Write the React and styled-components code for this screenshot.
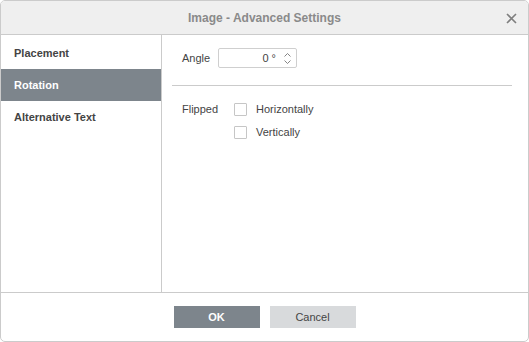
import React, { useState } from "react";
import styled, { createGlobalStyle } from "styled-components";

const GlobalStyle = createGlobalStyle`
  html, body {
    margin: 0;
    padding: 0;
    background: #ffffff;
  }
  body {
    font-family: Arial, "Liberation Sans", Helvetica, sans-serif;
    font-size: 11px;
    color: #444444;
  }
`;

const Dialog = styled.div`
  width: 529px;
  height: 342px;
  box-sizing: border-box;
  border: 1px solid #cbcbcb;
  border-radius: 5px;
  overflow: hidden;
  display: flex;
  flex-direction: column;
  background: #ffffff;
`;

const Header = styled.div`
  height: 33px;
  flex: none;
  background: #efefef;
  border-bottom: 1px solid #cbcbcb;
  position: relative;
  display: flex;
  align-items: center;
  justify-content: center;
`;

const Title = styled.div`
  font-size: 12px;
  font-weight: bold;
  color: #8a8a8a;
`;

const CloseButton = styled.div`
  position: absolute;
  right: 11px;
  top: 11px;
  width: 12px;
  height: 12px;
  display: flex;
  align-items: center;
  justify-content: center;
`;

const Body = styled.div`
  flex: 1;
  display: flex;
  min-height: 0;
`;

const Sidebar = styled.div`
  width: 160px;
  flex: none;
  border-right: 1px solid #cbcbcb;
  padding-top: 2px;
  display: flex;
  flex-direction: column;
`;

const NavItem = styled.div`
  height: 32px;
  display: flex;
  align-items: center;
  padding-left: 13px;
  font-weight: bold;
  font-size: 11px;
  color: ${(p) => (p.$active ? "#ffffff" : "#444444")};
  background: ${(p) => (p.$active ? "#7d858c" : "transparent")};
`;

const Panel = styled.div`
  flex: 1;
  padding: 13px 16px 0 10px;
  display: flex;
  flex-direction: column;
`;

const Row = styled.div`
  display: flex;
  align-items: ${(p) => (p.$top ? "flex-start" : "center")};
  margin-left: 10px;
`;

const Label = styled.div`
  width: ${(p) => p.$width}px;
  flex: none;
  height: 20px;
  line-height: 21px;
  font-size: 11px;
  color: #444444;
`;

const SpinBox = styled.div`
  width: 77px;
  height: 18px;
  border: 1px solid #cfcfcf;
  border-radius: 2px;
  display: flex;
  align-items: center;
  justify-content: flex-end;
  font-size: 11px;
  color: #444444;
`;

const SpinValue = styled.span`
  margin-right: 5px;
`;

const SpinArrows = styled.div`
  width: 13px;
  height: 18px;
  display: flex;
  flex-direction: column;
  align-items: center;
  justify-content: center;
  gap: 3px;
  margin-right: 2px;
`;

const Divider = styled.div`
  height: 1px;
  background: #cbcbcb;
  margin: 17px 0 13px;
`;

const CheckColumn = styled.div`
  display: flex;
  flex-direction: column;
  gap: 3px;
`;

const CheckLine = styled.label`
  display: flex;
  align-items: center;
  height: 20px;
  gap: 9px;
  font-size: 11px;
  color: #444444;
  cursor: pointer;
`;

const CheckBox = styled.span`
  width: 11px;
  height: 11px;
  border: 1px solid #c6c6c6;
  border-radius: 1px;
  background: #ffffff;
  display: inline-block;
`;

const Footer = styled.div`
  height: 48px;
  flex: none;
  border-top: 1px solid #cbcbcb;
  display: flex;
  align-items: center;
  justify-content: center;
  gap: 10px;
`;

const Button = styled.div`
  width: 86px;
  height: 22px;
  display: flex;
  align-items: center;
  justify-content: center;
  font-size: 11px;
  font-weight: ${(p) => (p.$primary ? "bold" : "normal")};
  background: ${(p) => (p.$primary ? "#7d858c" : "#d8dadc")};
  color: ${(p) => (p.$primary ? "#ffffff" : "#444444")};
`;

const Chevron = ({ up }) => (
  <svg width="7" height="4" viewBox="0 0 7 4">
    <path
      d={up ? "M0.5 3.5 L3.5 0.5 L6.5 3.5" : "M0.5 0.5 L3.5 3.5 L6.5 0.5"}
      fill="none"
      stroke="#777"
      strokeWidth="0.9"
    />
  </svg>
);

const App = () => {
  const [active] = useState("Rotation");
  const tabs = ["Placement", "Rotation", "Alternative Text"];

  return (
    <>
      <GlobalStyle />
      <Dialog>
        <Header>
          <Title>Image - Advanced Settings</Title>
          <CloseButton>
            <svg width="11" height="11" viewBox="0 0 11 11">
              <path d="M1 1 L10 10 M10 1 L1 10" stroke="#7f7f7f" strokeWidth="1.6" />
            </svg>
          </CloseButton>
        </Header>
        <Body>
          <Sidebar>
            {tabs.map((t) => (
              <NavItem key={t} $active={t === active}>
                {t}
              </NavItem>
            ))}
          </Sidebar>
          <Panel>
            <Row>
              <Label $width={36}>Angle</Label>
              <SpinBox>
                <SpinValue>0 °</SpinValue>
                <SpinArrows>
                  <Chevron up />
                  <Chevron />
                </SpinArrows>
              </SpinBox>
            </Row>
            <Divider />
            <Row $top>
              <Label $width={52}>Flipped</Label>
              <CheckColumn>
                <CheckLine>
                  <CheckBox />
                  Horizontally
                </CheckLine>
                <CheckLine>
                  <CheckBox />
                  Vertically
                </CheckLine>
              </CheckColumn>
            </Row>
          </Panel>
        </Body>
        <Footer>
          <Button $primary>OK</Button>
          <Button>Cancel</Button>
        </Footer>
      </Dialog>
    </>
  );
};

export default App;
